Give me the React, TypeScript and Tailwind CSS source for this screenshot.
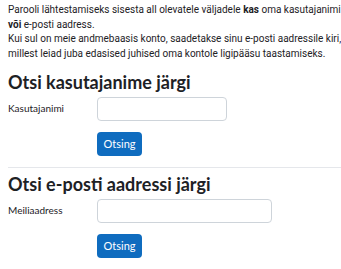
import React from "react";

function SearchRow({ label, inputWidth }: { label: string; inputWidth: string }) {
  return (
    <div>
      <div className="flex items-center mt-[4px]">
        <label className="w-[89px] text-[10px] leading-[15px]">{label}</label>
        <input
          type="text"
          className={`${inputWidth} h-[24px] rounded-[4px] border border-[#ced4da] bg-white`}
        />
      </div>
      <div className="flex mt-[11px] pl-[89px]">
        <button className="h-[24px] w-[45px] rounded-[4px] bg-[#0f6cbf] text-white text-[11px]">
          Otsing
        </button>
      </div>
    </div>
  );
}

export default function App() {
  return (
    <div className="w-[341px] h-[269px] bg-white text-[#1d2125] pl-[8px] pt-[3px] font-['Lato',sans-serif] overflow-hidden">
      {/* Intro text */}
      <div className="text-[10px] leading-[14.7px] whitespace-nowrap font-['Roboto',sans-serif]">
        <p>
          Parooli lähtestamiseks sisesta all olevatele väljadele <b>kas</b> oma kasutajanimi
          <br />
          <b>või</b> e-posti aadress.
        </p>
        <p>
          Kui sul on meie andmebaasis konto, saadetakse sinu e-posti aadressile kiri,
          <br />
          millest leiad juba edasised juhised oma kontole ligipääsu taastamiseks.
        </p>
      </div>

      {/* Username search */}
      <h3 className="mt-[9px] text-[18px] leading-[22px] font-bold">Otsi kasutajanime järgi</h3>
      <SearchRow label="Kasutajanimi" inputWidth="w-[130px]" />

      <div className="mt-[11px] border-t border-[#e5e7eb]" />

      {/* Email search */}
      <h3 className="mt-[5px] text-[18px] leading-[22px] font-bold">Otsi e-posti aadressi järgi</h3>
      <SearchRow label="Meiliaadress" inputWidth="w-[175px]" />
    </div>
  );
}
